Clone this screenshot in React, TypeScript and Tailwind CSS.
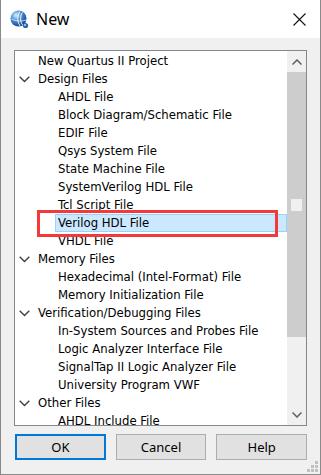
import React from "react";

type Row = { label: string; level: 0 | 1; group?: boolean; selected?: boolean };

const rows: Row[] = [
  { label: "New Quartus II Project", level: 0 },
  { label: "Design Files", level: 0, group: true },
  { label: "AHDL File", level: 1 },
  { label: "Block Diagram/Schematic File", level: 1 },
  { label: "EDIF File", level: 1 },
  { label: "Qsys System File", level: 1 },
  { label: "State Machine File", level: 1 },
  { label: "SystemVerilog HDL File", level: 1 },
  { label: "Tcl Script File", level: 1 },
  { label: "Verilog HDL File", level: 1, selected: true },
  { label: "VHDL File", level: 1 },
  { label: "Memory Files", level: 0, group: true },
  { label: "Hexadecimal (Intel-Format) File", level: 1 },
  { label: "Memory Initialization File", level: 1 },
  { label: "Verification/Debugging Files", level: 0, group: true },
  { label: "In-System Sources and Probes File", level: 1 },
  { label: "Logic Analyzer Interface File", level: 1 },
  { label: "SignalTap II Logic Analyzer File", level: 1 },
  { label: "University Program VWF", level: 1 },
  { label: "Other Files", level: 0, group: true },
  { label: "AHDL Include File", level: 1 },
];

function Chevron() {
  return (
    <svg width="11" height="7" viewBox="0 0 11 7" className="block">
      <path d="M0.7 0.7 L5.5 5.5 L10.3 0.7" fill="none" stroke="#404040" strokeWidth="1.4" />
    </svg>
  );
}

function AppIcon() {
  return (
    <svg width="19" height="19" viewBox="0 0 19 19" className="block">
      <defs>
        <radialGradient id="g" cx="35%" cy="30%" r="75%">
          <stop offset="0%" stopColor="#d6ecff" />
          <stop offset="45%" stopColor="#4a8fd6" />
          <stop offset="100%" stopColor="#123f86" />
        </radialGradient>
      </defs>
      <circle cx="8.5" cy="8.5" r="8" fill="url(#g)" />
      <path d="M10 1.5 C7 6 7 11 10 16" fill="none" stroke="#ffffff" strokeWidth="1" opacity="0.9" />
      <path d="M12.5 2.5 C10 6 10 11 12.5 15" fill="none" stroke="#ffffff" strokeWidth="1" opacity="0.9" />
      <path d="M1.5 9 C5 11 10 12 16 10" fill="none" stroke="#ffffff" strokeWidth="0.9" opacity="0.8" />
      <circle cx="15.5" cy="15.5" r="2.6" fill="#1c65b8" />
      <circle cx="15" cy="15" r="1.1" fill="#a9d2ff" />
    </svg>
  );
}

export default function App() {
  const treeFont = { fontFamily: '"DejaVu Sans Condensed", "DejaVu Sans", sans-serif' };
  return (
    <div className="w-[321px] h-[475px] bg-[#f0f0f0] border-x border-b border-[#8a8a8a] flex flex-col overflow-hidden">
      {/* Title bar */}
      <div className="h-[38px] bg-white flex items-center shrink-0">
        <div className="ml-[9px] mt-[1px]">
          <AppIcon />
        </div>
        <div
          className="ml-[7px] text-[16px] text-black leading-none"
          style={{ fontFamily: '"Noto Sans", "Open Sans", sans-serif' }}
        >
          New
        </div>
        <div className="ml-auto mr-[14px] flex items-center justify-center w-[14px] h-[14px]">
          <svg width="13" height="13" viewBox="0 0 13 13">
            <path d="M0.5 0.5 L12.5 12.5 M12.5 0.5 L0.5 12.5" stroke="#111" strokeWidth="1.1" />
          </svg>
        </div>
      </div>

      {/* Body */}
      <div className="flex-1 flex flex-col px-[13px] pt-[12px] relative">
        {/* List box */}
        <div className="relative h-[376px] border border-[#828790] bg-white flex overflow-hidden">
          <div className="flex-1 pt-[1px] relative overflow-hidden" style={treeFont}>
            {rows.map((r, i) => (
              <div key={i} className="h-[18px] flex items-center text-[13px] text-black whitespace-nowrap">
                {r.level === 0 ? (
                  <>
                    <div className="w-[23px] pl-[4px] flex items-center">{r.group ? <Chevron /> : null}</div>
                    <span>{r.label}</span>
                  </>
                ) : (
                  <div
                    className={
                      "ml-[40px] flex-1 h-[18px] flex items-center pl-[2px] border " +
                      (r.selected ? "bg-[#cce8ff] border-[#99d1ff]" : "border-transparent")
                    }
                  >
                    {r.label}
                  </div>
                )}
              </div>
            ))}
            {/* red annotation box */}
            <div className="absolute left-[22px] top-[159px] w-[241px] h-[27px] border-[3px] border-[#f23a3a]" />
          </div>
          {/* Scrollbar */}
          <div className="w-[19px] bg-[#f0f0f0] flex flex-col relative">
            <div className="h-[21px] flex items-center justify-center">
              <svg width="10" height="6" viewBox="0 0 10 6">
                <path d="M0.5 5.5 L5 1 L9.5 5.5" fill="none" stroke="#606060" strokeWidth="1.5" />
              </svg>
            </div>
            <div className="h-[265px] bg-[#cdcdcd] relative">
              <div className="absolute left-[4px] top-[127px] w-[11px] h-[12px] bg-[#f0f0f0]" />
            </div>
            <div className="flex-1" />
            <div className="h-[21px] flex items-center justify-center">
              <svg width="10" height="6" viewBox="0 0 10 6">
                <path d="M0.5 0.5 L5 5 L9.5 0.5" fill="none" stroke="#606060" strokeWidth="1.5" />
              </svg>
            </div>
          </div>
        </div>

        {/* Buttons */}
        <div className="mt-[8px] flex gap-[10px] pl-[1px]" style={{ fontFamily: '"Noto Sans", "Open Sans", sans-serif' }}>
          <button className="w-[91px] h-[26px] bg-[#e1e1e1] border-2 border-[#0078d7] text-[13px] text-black leading-none">
            OK
          </button>
          <button className="w-[91px] h-[26px] bg-[#e1e1e1] border border-[#adadad] text-[13px] text-black leading-none">
            Cancel
          </button>
          <button className="w-[91px] h-[26px] bg-[#e1e1e1] border border-[#adadad] text-[13px] text-black leading-none">
            Help
          </button>
        </div>

        {/* Grip */}
        <svg className="absolute right-[2px] bottom-[2px]" width="11" height="11" viewBox="0 0 11 11">
          <rect x="8" y="0" width="3" height="3" fill="#c0c0c0" />
          <rect x="4" y="4" width="3" height="3" fill="#c0c0c0" />
          <rect x="8" y="4" width="3" height="3" fill="#c0c0c0" />
          <rect x="0" y="8" width="3" height="3" fill="#c0c0c0" />
          <rect x="4" y="8" width="3" height="3" fill="#c0c0c0" />
          <rect x="8" y="8" width="3" height="3" fill="#c0c0c0" />
        </svg>
      </div>
    </div>
  );
}
